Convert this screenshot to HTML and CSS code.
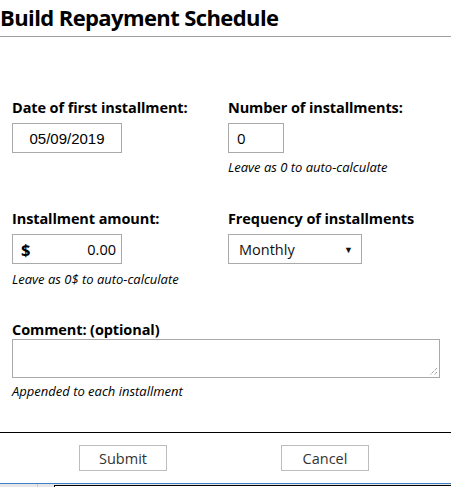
FILE: index.html
```html
<!DOCTYPE html>
<html>
<head>
<meta charset="utf-8">
<link rel="stylesheet" href="styles.css">
</head>
<body>
<div class="page">
  <header class="head"><h1 class="title">Build Repayment Schedule</h1></header>
  <main class="form">
    <div class="grid">
      <div class="field">
        <label class="label">Date of first installment:</label>
        <div class="box box-date">05/09/2019</div>
      </div>
      <div class="field">
        <label class="label">Number of installments:</label>
        <div class="box box-num">0</div>
        <div class="hint hint-1">Leave as 0 to auto-calculate</div>
      </div>
      <div class="field row2">
        <label class="label">Installment amount:</label>
        <div class="box box-amt"><span class="cur">$</span><span class="amt">0.00</span></div>
        <div class="hint">Leave as 0$ to auto-calculate</div>
      </div>
      <div class="field row2">
        <label class="label">Frequency of installments</label>
        <div class="box box-sel"><span>Monthly</span><span class="arrow">▼</span></div>
      </div>
    </div>
    <div class="field comment">
      <label class="label label-c">Comment: (optional)</label>
      <div class="box box-area">
        <svg class="grip" width="9" height="9" viewBox="0 0 9 9"><path d="M8 1L1 8M8 5L5 8" stroke="#777" stroke-width="1" stroke-dasharray="1 1"/></svg>
      </div>
      <div class="hint hint-c">Appended to each installment</div>
    </div>
  </main>
  <footer class="foot">
    <button class="btn">Submit</button>
    <button class="btn">Cancel</button>
  </footer>
  <div class="taskbar"><span class="tb-a"></span><span class="tb-b"></span><span class="tb-c"></span></div>
</div>
</body>
</html>
```
FILE: styles.css
```css
html, body { margin: 0; padding: 0; background: #fff; }
body { font-family: "Open Sans", "Noto Sans", sans-serif; color: #000; width: 451px; height: 487px; overflow: hidden; }
.page { display: flex; flex-direction: column; height: 487px; }
.head { height: 37px; box-sizing: border-box; border-bottom: 1px solid #a0a0a0; flex: none; }
.title { margin: 0; padding: 3px 0 0 0; font-size: 22px; font-weight: 700; line-height: 28px; letter-spacing: -0.6px; }
.form { padding: 61px 12px 0 12px; height: 395px; box-sizing: border-box; flex: none; }
.grid { display: grid; grid-template-columns: 216px 1fr; }
.field { display: flex; flex-direction: column; align-items: flex-start; }
.row2 { margin-top: 33px; }
.label { font-size: 14.5px; font-weight: 700; line-height: 20px; letter-spacing: -0.1px; height: 25px; }
.label-c { height: 19px; }
.box { border: 1px solid #a9a9a9; box-sizing: border-box; height: 30px; display: flex; align-items: center; background: #fff; }
.box-date { width: 110px; justify-content: center; font-family: "Liberation Sans", Arial, sans-serif; font-size: 15px; }
.box-num { width: 56px; padding-left: 8px; font-size: 15px; }
.box-amt { width: 110px; padding: 0 5px 0 8px; justify-content: space-between; }
.cur { font-weight: 700; font-size: 16.5px; }
.amt { font-size: 14.5px; }
.box-sel { width: 134px; padding: 0 8px 0 10px; justify-content: space-between; font-size: 14.5px; color: #111; }
.arrow { font-size: 9px; }
.hint { font-size: 13px; font-style: italic; line-height: 17px; margin-top: 7px; }
.hint-1 { margin-top: 6px; }
.hint-c { margin-top: 5px; }
.comment { margin-top: 32px; }
.box-area { width: 428px; height: 39px; position: relative; }
.grip { position: absolute; right: 1px; bottom: 1px; }
.foot { border-top: 1px solid #000; height: 51px; display: flex; align-items: flex-start; padding-top: 12px; box-sizing: border-box; flex: none; }
.btn { font-family: "Open Sans", sans-serif; font-size: 14.5px; color: #333; background: #fff; border: 1px solid #bdbdbd; width: 88px; height: 26px; padding: 0; }
.btn:first-child { margin-left: 79px; }
.btn:last-child { margin-left: 114px; }
.taskbar { flex: 1; border-top: 1px solid #3c7fc4; background: #e6e6e6; display: flex; }
.tb-a { width: 37px; border-right: 1px solid #c8c8c8; }
.tb-b { width: 16px; }
.tb-c { flex: 1; border-top: 1px solid #000; border-left: 1px solid #000; margin-top: 1px; background: #fff; }
```
